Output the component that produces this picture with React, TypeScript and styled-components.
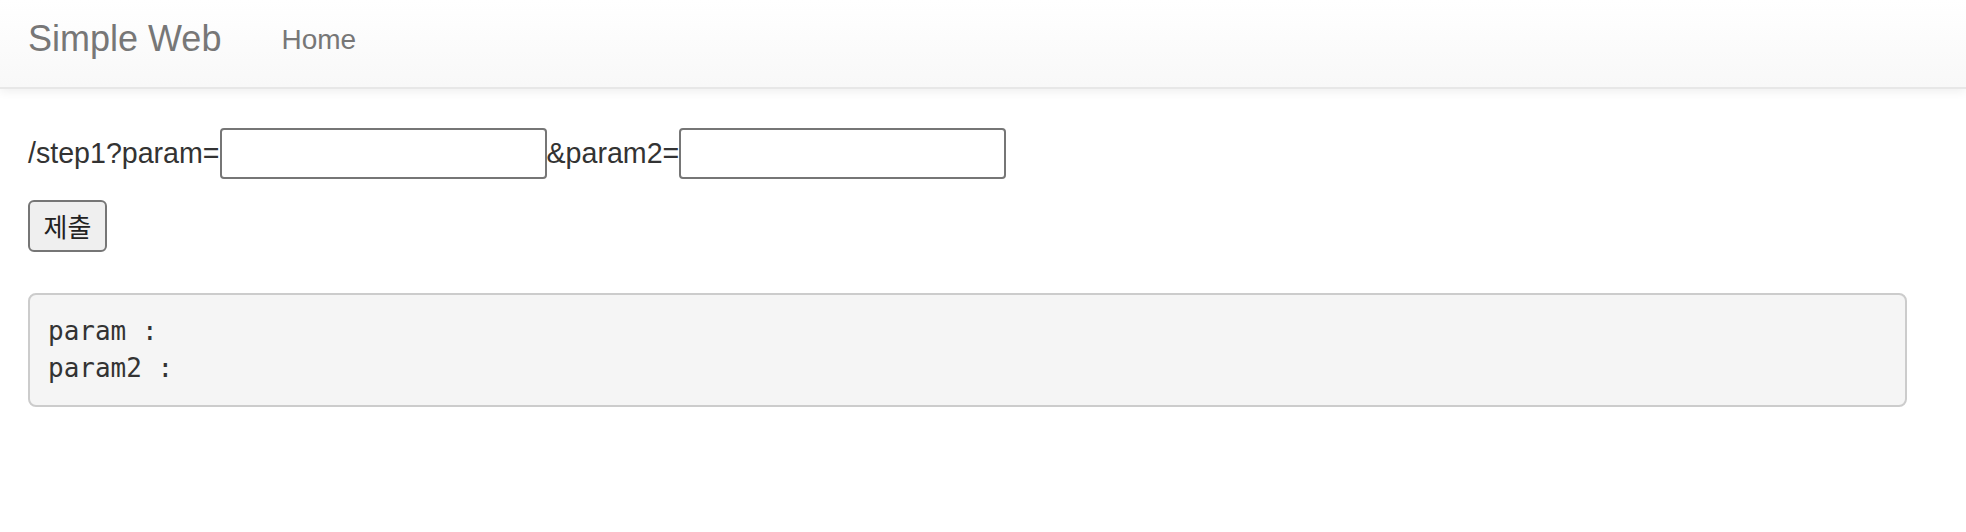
import React from 'react'
import styled, { createGlobalStyle } from 'styled-components'

const GlobalStyle = createGlobalStyle`
    html, body {
        margin: 0;
        padding: 0;
        background: #fff;
    }

    body {
        font-family: "Liberation Sans", Arial, "Noto Sans CJK KR", sans-serif;
        font-size: 28px;
        color: #333;
    }
`

const Navbar = styled.nav`
    box-sizing: content-box;
    height: 87px;
    padding: 0 28px;
    display: flex;
    align-items: flex-start;
    gap: 60px;
    background-image: linear-gradient(to bottom, #ffffff 0%, #f8f8f8 100%);
    border-bottom: 2px solid #e7e7e7;
    box-shadow: 0 2px 10px rgba(0, 0, 0, 0.075);
`

const Brand = styled.a`
    padding-top: 19px;
    font-size: 36px;
    line-height: 40px;
    color: #777;
    text-decoration: none;
`

const NavLink = styled.a`
    padding-top: 20px;
    font-size: 28px;
    line-height: 40px;
    color: #777;
    text-decoration: none;
`

const Main = styled.main`
    padding: 39px 28px 0;
`

const QueryRow = styled.form`
    display: flex;
    align-items: center;
    height: 51px;
`

const Label = styled.span`
    white-space: pre;
    font-size: 28.6px;
    line-height: 1;
`

const TextInput = styled.input`
    box-sizing: border-box;
    width: 327px;
    height: 51px;
    margin: 0;
    padding: 2px 8px;
    border: 2px solid #767676;
    border-radius: 4px;
    background: #fff;
    font: inherit;
    outline: none;
`

const SubmitButton = styled.button`
    box-sizing: border-box;
    margin-top: 21px;
    width: 79px;
    height: 52px;
    padding: 0;
    border: 2px solid #767676;
    border-radius: 6px;
    background: #efefef;
    color: #222;
    font-family: "Noto Sans CJK KR", sans-serif;
    font-size: 26px;
    line-height: 1;
`

const Output = styled.pre`
    box-sizing: border-box;
    max-width: 1879px;
    margin: 41px 0 0;
    padding: 18px 18px;
    border: 2px solid #ccc;
    border-radius: 8px;
    background: #f5f5f5;
    color: #333;
    font-family: "DejaVu Sans Mono", "Liberation Mono", monospace;
    font-size: 26px;
    line-height: 37px;
    white-space: pre-wrap;
`

export default function App() {
    const [param, setParam] = React.useState('')
    const [param2, setParam2] = React.useState('')

    return (
        <>
            <GlobalStyle />
            <Navbar>
                <Brand href='#'>Simple Web</Brand>
                <NavLink href='#'>Home</NavLink>
            </Navbar>
            <Main>
                <QueryRow onSubmit={e => e.preventDefault()}>
                    <Label>/step1?param=</Label>
                    <TextInput value={param} onChange={e => setParam(e.target.value)} />
                    <Label>&amp;param2=</Label>
                    <TextInput value={param2} onChange={e => setParam2(e.target.value)} />
                </QueryRow>
                <SubmitButton type='submit'>제출</SubmitButton>
                <Output>{`param : \nparam2 : `}</Output>
            </Main>
        </>
    )
}
